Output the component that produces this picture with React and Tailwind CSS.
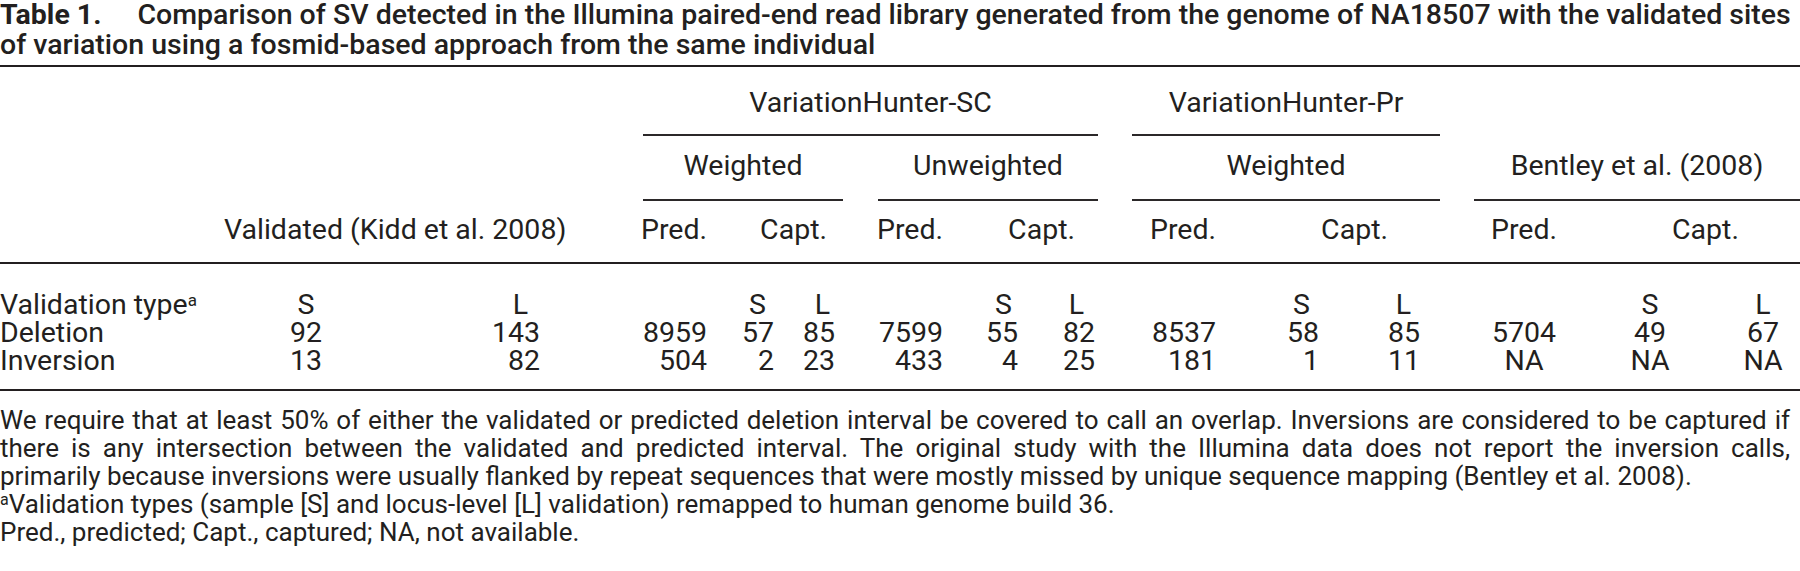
import React from "react";

const COLS =
  "grid grid-cols-[250px_112px_178px_167px_67px_61px_108px_75px_77px_121px_103px_101px_208px_44px_128px]";

const ALIGN = [
  "text-center",
  "text-right",
  "text-right",
  "text-right",
  "text-right",
  "text-right",
  "text-right",
  "text-right",
  "text-right",
  "text-right",
  "text-right",
  "text-center",
  "text-center",
  "text-center pl-[54px]",
];

// S / L markers sit a bit left of the right-aligned numbers
const TYPE_PAD = [
  "",
  "pr-[12px]",
  "",
  "pr-[8px]",
  "pr-[5px]",
  "",
  "pr-[6px]",
  "pr-[11px]",
  "",
  "pr-[9px]",
  "pr-[9px]",
  "",
  "",
  "",
];

const rows = [
  {
    label: (
      <>
        Validation type<sup className="text-[17px]">a</sup>
      </>
    ),
    type: true,
    cells: ["S", "L", "", "S", "L", "", "S", "L", "", "S", "L", "", "S", "L"],
  },
  {
    label: "Deletion",
    cells: ["92", "143", "8959", "57", "85", "7599", "55", "82", "8537", "58", "85", "5704", "49", "67"],
  },
  {
    label: "Inversion",
    cells: ["13", "82", "504", "2", "23", "433", "4", "25", "181", "1", "11", "NA", "NA", "NA"],
  },
];

function Rule({ className = "" }) {
  return <div className={"h-[2px] bg-[#231f20] " + className} />;
}

function SpanHead({ children, className, gap }) {
  return (
    <div className={className}>
      <div className="text-center whitespace-nowrap">{children}</div>
      <div className={"h-[2px] bg-[#2b2829] " + gap} />
    </div>
  );
}

export default function App() {
  return (
    <div className="w-[1800px] min-h-[571px] bg-white font-['Roboto',sans-serif] text-[#231f20]">
      {/* caption */}
      <div className="text-[28.5px] leading-[30px]">
        <div className="whitespace-nowrap">
          <span className="font-bold">Table 1.</span>
          <span className="ml-[36px] font-medium">
            Comparison of SV detected in the Illumina paired-end read library generated from the genome of NA18507 with
            the validated sites
          </span>
        </div>
        <div className="whitespace-nowrap font-medium">
          of variation using a fosmid-based approach from the same individual
        </div>
      </div>

      <Rule className="mt-[5px]" />

      {/* header */}
      <div className="text-[28.5px] leading-[28px]">
        <div className={COLS + " pt-[22px]"}>
          <SpanHead className="col-start-4 col-span-6 ml-[103px] -mr-[3px]" gap="mt-[17px]">
            VariationHunter-SC
          </SpanHead>
          <SpanHead className="col-start-10 col-span-3 ml-[37px] -mr-[20px]" gap="mt-[17px]">
            VariationHunter-Pr
          </SpanHead>
        </div>

        <div className={COLS + " pt-[16px]"}>
          <SpanHead className="col-start-4 col-span-3 ml-[103px] -mr-[8px]" gap="mt-[19px]">
            Weighted
          </SpanHead>
          <SpanHead className="col-start-7 col-span-3 ml-[43px] -mr-[3px]" gap="mt-[19px]">
            Unweighted
          </SpanHead>
          <SpanHead className="col-start-10 col-span-3 ml-[37px] -mr-[20px]" gap="mt-[19px]">
            Weighted
          </SpanHead>
          <SpanHead className="col-start-13 col-span-3 ml-[54px]" gap="mt-[19px]">
            Bentley et al. (2008)
          </SpanHead>
        </div>

        <div className={COLS + " pt-[15px] whitespace-nowrap"}>
          <div className="col-span-3 pl-[224px]">Validated (Kidd et al. 2008)</div>
          <div className="text-right">Pred.</div>
          <div className="col-span-2 text-right pr-[8px]">Capt.</div>
          <div className="text-right">Pred.</div>
          <div className="col-span-2 text-right pr-[20px]">Capt.</div>
          <div className="text-right">Pred.</div>
          <div className="col-span-2 text-right pr-[32px]">Capt.</div>
          <div className="text-center">Pred.</div>
          <div className="col-span-2 pl-[44px]">Capt.</div>
        </div>
      </div>

      <Rule className="mt-[18px]" />

      {/* body */}
      <div className="pt-[27px] text-[28.5px] leading-[28px]">
        {rows.map((row, r) => (
          <div key={r} className={COLS + " whitespace-nowrap"}>
            <div>{row.label}</div>
            {row.cells.map((c, i) => (
              <div key={i} className={ALIGN[i] + " " + (row.type ? TYPE_PAD[i] : "")}>
                {c}
              </div>
            ))}
          </div>
        ))}
      </div>

      <Rule className="mt-[14px]" />

      {/* notes */}
      <div className="w-[1790px] pt-[15px] text-[26px] leading-[28px]">
        <div className="whitespace-nowrap text-justify [text-align-last:justify]">
          We require that at least 50% of either the validated or predicted deletion interval be covered to call an
          overlap. Inversions are considered to be captured if
        </div>
        <div className="whitespace-nowrap text-justify [text-align-last:justify]">
          there is any intersection between the validated and predicted interval. The original study with the Illumina
          data does not report the inversion calls,
        </div>
        <div className="whitespace-nowrap">
          primarily because inversions were usually flanked by repeat sequences that were mostly missed by unique
          sequence mapping (Bentley et al. 2008).
        </div>
        <div className="whitespace-nowrap">
          <sup className="text-[16px]">a</sup>Validation types (sample [S] and locus-level [L] validation) remapped to
          human genome build 36.
        </div>
        <div className="whitespace-nowrap">Pred., predicted; Capt., captured; NA, not available.</div>
      </div>
    </div>
  );
}
